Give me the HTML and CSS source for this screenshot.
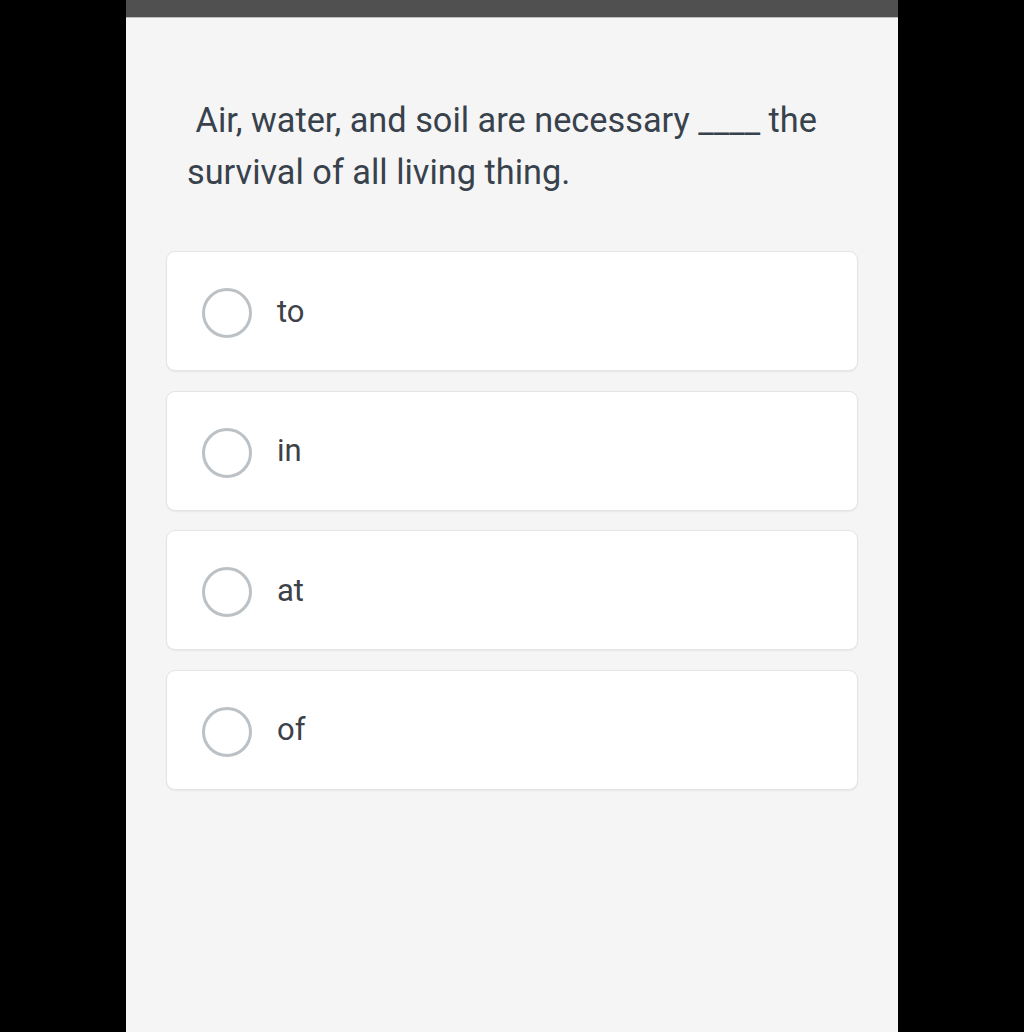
FILE: index.html
```html
<!DOCTYPE html>
<html>
<head>
<meta charset="utf-8">
<link rel="stylesheet" href="styles.css">
</head>
<body>
<div class="panel">
  <div class="topbar"></div>
  <div class="content">
    <p class="question">&nbsp;Air, water, and soil are necessary ____ the survival of all living thing.</p>
    <div class="options">
      <div class="option"><span class="radio"></span><span class="label">to</span></div>
      <div class="option"><span class="radio"></span><span class="label">in</span></div>
      <div class="option"><span class="radio"></span><span class="label">at</span></div>
      <div class="option"><span class="radio"></span><span class="label">of</span></div>
    </div>
  </div>
</div>
</body>
</html>
```
FILE: styles.css
```css
html, body {
  margin: 0;
  padding: 0;
  background: #000;
  height: 1032px;
  overflow: hidden;
}
body {
  font-family: Roboto, "Liberation Sans", sans-serif;
}
.panel {
  margin-left: 126px;
  width: 772px;
  height: 1032px;
  background: #f5f5f5;
}
.topbar {
  height: 18px;
  background: #505050;
  border-bottom: 1px solid #bdbdbd;
  box-sizing: border-box;
}
.content {
  padding: 76px 40px 0 40px;
}
.question {
  margin: 0 0 53px 0;
  padding: 0 21px;
  font-size: 34.3px;
  line-height: 52px;
  color: #38424c;
}
.options {
  display: flex;
  flex-direction: column;
  gap: 19.5px;
}
.option {
  height: 120px;
  box-sizing: border-box;
  background: #fff;
  border: 1px solid #e4e4e4;
  border-radius: 9px;
  box-shadow: 0 1px 2px rgba(0,0,0,0.06);
  display: flex;
  align-items: center;
  padding-left: 35px;
}
.radio {
  width: 50px;
  height: 50px;
  box-sizing: border-box;
  border: 3.5px solid #bcc1c6;
  border-radius: 50%;
  flex: none;
  position: relative;
  top: 2px;
}
.label {
  margin-left: 25px;
  font-size: 31px;
  color: #3c4248;
}
```
